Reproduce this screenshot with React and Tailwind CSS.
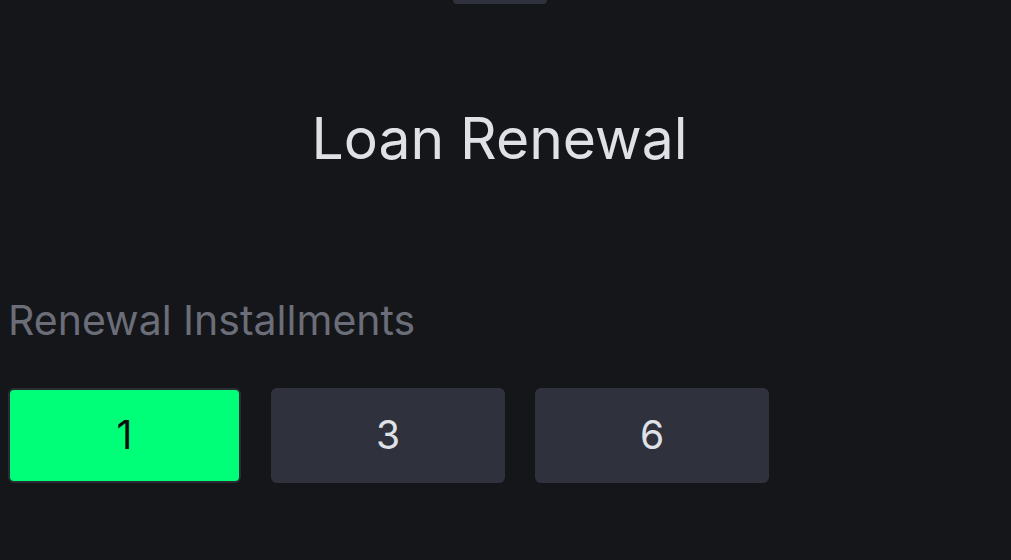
import { useState } from "react";

const OPTIONS = [1, 3, 6];

export default function App() {
  const [selected, setSelected] = useState(1);

  return (
    <div
      className="w-[1011px] h-[560px] bg-[#15161a] overflow-hidden flex flex-col"
      style={{ fontFamily: "Inter, 'Noto Sans', sans-serif" }}
    >
      {/* drag handle + title, centred in the 999px content area */}
      <div className="w-[999px] flex flex-col items-center">
        <div className="w-[94px] h-[4px] bg-[#2f323c] rounded-b-md" />
        <h1 className="mt-[100px] text-[57px] leading-[70px] text-[#dfe1e6] font-normal">
          Loan Renewal
        </h1>
      </div>

      <div className="px-2 mt-[121px]">
        <p className="text-[41px] leading-[50px] text-[#6b6e78]">Renewal Installments</p>
        <div className="mt-[43px] flex gap-[30px]">
          {OPTIONS.map((n) => (
            <button
              key={n}
              onClick={() => setSelected(n)}
              className={
                selected === n
                  ? "w-[233px] h-[95px] rounded-md border-2 border-[#2b2d36] bg-[#00ff78] text-[#0c0d10] text-[39px]"
                  : "w-[234px] h-[95px] rounded-md bg-[#2f323c] text-[#dfe1e6] text-[39px]"
              }
            >
              {n}
            </button>
          ))}
        </div>
      </div>
    </div>
  );
}
